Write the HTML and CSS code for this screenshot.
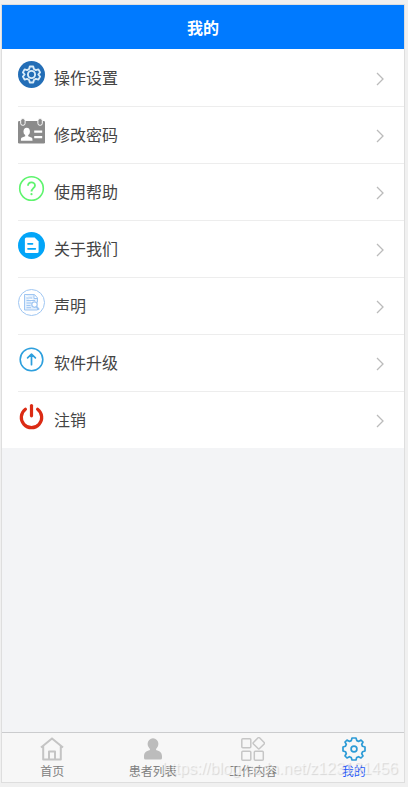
FILE: index.html
```
<!DOCTYPE html>
<html lang="zh-CN">
<head>
<meta charset="utf-8">
<title>我的</title>
<link rel="stylesheet" href="styles.css">
</head>
<body>
<div class="phone">
  <header class="bar">我的</header>
  <main class="content">
    <ul class="list">
      <li class="row">
        <svg class="icon" viewBox="0 0 27 27"><circle cx="13.5" cy="13.5" r="13.5" fill="#236eb7"/><g fill="none" stroke="#d9ebf8"><path stroke-width="1.9" stroke-linejoin="round" d="M11.8 5.5h3.4l.7 2.5 2 1.1 2.5-.7 1.7 3-1.8 2.1 1.8 2.1-1.7 3-2.5-.7-2 1.1-.7 2.5h-3.4l-.7-2.5-2-1.1-2.500.7-1.700-3 1.800-2.100-1.800-2.100 1.700-3 2.500.7 2-1.100z"/><circle cx="13.5" cy="13.5" r="3.6" stroke-width="1.9"/></g></svg>
        <span class="label">操作设置</span><svg class="arrow" viewBox="0 0 8 14"><path d="M1 1l6 6-6 6"/></svg>
      </li>
      <li class="row">
        <svg class="icon" viewBox="0 0 27 27"><rect y="3" width="27" height="22.6" rx="1.3" fill="#8b8b8b"/><g fill="#8b8b8b" stroke="#fff" stroke-width="1"><rect x="2.7" y=".6" width="4.4" height="6.7" rx="2"/><rect x="19.9" y=".6" width="4.4" height="6.7" rx="2"/></g><g fill="#fff"><ellipse cx="8.7" cy="13.6" rx="3.2" ry="3.8"/><path d="M7.2 16h3v2.3l3.700 1.500c.5.500.6 1.500.6 2.900H2.900c0-1.400.1-2.400.6-2.900l3.700-1.500zM16.200 12.400h8v2.300h-8zM16.200 18h8v2.300h-8z"/></g></svg>
        <span class="label">修改密码</span><svg class="arrow" viewBox="0 0 8 14"><path d="M1 1l6 6-6 6"/></svg>
      </li>
      <li class="row">
        <svg class="icon" viewBox="0 0 27 27"><g fill="none" stroke="#5ef46e"><circle cx="13.5" cy="13.5" r="11.8" stroke-width="1.6"/><path stroke-width="1.8" d="M10 10.8c0-4.500 7-4.500 7-.4 0 2.600-3.500 3-3.500 6.200"/></g><circle cx="13.5" cy="19.200" r="1.100" fill="#5ef46e"/></svg>
        <span class="label">使用帮助</span><svg class="arrow" viewBox="0 0 8 14"><path d="M1 1l6 6-6 6"/></svg>
      </li>
      <li class="row">
        <svg class="icon" viewBox="0 0 27 27"><circle cx="13.5" cy="13.5" r="13.5" fill="#03a5f8"/><path fill="#fff" d="M8.400 5.600h8.200l4 4v10q0 1.500-1.500 1.500H8.400q-1.500 0-1.500-1.500V7.100q0-1.500 1.500-1.500z"/><path stroke="#03a5f8" stroke-width="1.700" stroke-linecap="round" d="M10 11.800h4.500M10 16.800h7.300"/></svg>
        <span class="label">关于我们</span><svg class="arrow" viewBox="0 0 8 14"><path d="M1 1l6 6-6 6"/></svg>
      </li>
      <li class="row">
        <svg class="icon" viewBox="0 0 27 27"><g fill="none" stroke="#9fc6f2"><circle cx="13.5" cy="13.5" r="13"/><path fill="#e4f0fd" d="M6.500 5.500h10l3 3.400v4.600M19.500 19.500v1.500h-13V5.500M16 6v3.500h3.500"/><path d="M8.500 9h5.500M8.500 11.500h8.500M8.500 14h5M8.500 16.500h4M8.500 18.700h4.500"/><circle cx="16.500" cy="15.600" r="2.700" fill="#fff" stroke-width="1.200"/><path stroke-width="1.700" d="M18.400 17.600l2.700 3"/></g></svg>
        <span class="label">声明</span><svg class="arrow" viewBox="0 0 8 14"><path d="M1 1l6 6-6 6"/></svg>
      </li>
      <li class="row">
        <svg class="icon" viewBox="0 0 27 27"><g fill="none" stroke="#2d9fdd" stroke-linecap="round" stroke-linejoin="round"><circle cx="13.5" cy="13.5" r="11.300" stroke-width="1.600"/><path stroke-width="1.700" d="M13.500 18.700V8.500M9.600 11.800l3.900-3.600 3.900 3.600"/></g></svg>
        <span class="label">软件升级</span><svg class="arrow" viewBox="0 0 8 14"><path d="M1 1l6 6-6 6"/></svg>
      </li>
      <li class="row">
        <svg class="icon" viewBox="0 0 27 27"><g fill="none" stroke="#db2b14" stroke-width="3.200" stroke-linecap="round"><path d="M13.500 2.600v10.200"/><path d="M7.400 6.300a10.200 10.200 0 1 0 12.200 0"/></g></svg>
        <span class="label">注销</span><svg class="arrow" viewBox="0 0 8 14"><path d="M1 1l6 6-6 6"/></svg>
      </li>
    </ul>
  </main>
  <nav class="tabs">
    <a class="tab"><svg class="tab-icon" viewBox="0 0 24 24"><g fill="none" stroke="#c4c4c4" stroke-width="2" stroke-linejoin="round"><path d="M1 10.400L12 1.400l11 9M3.200 9v13.500h17.600V9M9 22.500v-8.100h6v8.100"/></g></svg><span>首页</span></a>
    <a class="tab"><svg class="tab-icon" viewBox="0 0 24 24"><g fill="#bcbcbc"><ellipse cx="12" cy="7" rx="5.400" ry="5.700"/><path d="M8.500 10h7l-.5 3c4.100 1.200 6 2.700 6 6.500V21q0 1.600-1.600 1.600H4.600Q3 22.600 3 21v-1.500c0-3.800 1.900-5.300 6-6.500z"/></g></svg><span>患者列表</span></a>
    <a class="tab"><svg class="tab-icon" viewBox="0 0 24 24"><g fill="none" stroke="#c6c6c6" stroke-width="1.500"><rect x=".8" y="1.700" width="9" height="9" rx="1"/><rect x=".8" y="14.200" width="9" height="9" rx="1"/><rect x="13.300" y="14.200" width="9" height="9" rx="1"/><rect x="13.500" y="1.900" width="8.600" height="8.600" rx="1" transform="rotate(45 17.800 6.200)"/></g></svg><span>工作内容</span></a>
    <a class="tab active"><svg class="tab-icon" viewBox="0 0 24 24"><g fill="none" stroke="#2c9bd6" stroke-width="1.700" stroke-linejoin="round"><path d="M10 1h4l.8 2.600 1.800.8L19 3.100 21 5l-1.300 2.500.8 1.800L23 10v4l-2.500.8-.8 1.800L21 19l-2 2-2.500-1.300-1.800.8L14 23h-4l-.8-2.500-1.800-.8L5 21l-2-2 1.300-2.500-.8-1.800L1 14v-4l2.500-.8.8-1.800L3 5l2-1.900 2.500 1.300 1.800-.8z"/><circle cx="12" cy="12" r="2.900"/></g></svg><span>我的</span></a>
    <div class="watermark">https://blog.csdn.net/z123181456</div>
  </nav>
</div>
</body>
</html>
```
FILE: styles.css
```
* { box-sizing: border-box; }
body {
  margin: 0;
  height: 787px;
  padding: 4px 3px 4px 1px;
  overflow: hidden;
  background: #f0f0f0;
  font-family: "Noto Sans CJK SC", sans-serif;
}
.phone {
  display: flex;
  flex-direction: column;
  width: 404px;
  height: 779px;
  border: 1px solid #dedede;
  background: #f3f4f6;
}
.bar {
  height: 44px;
  background: #007aff;
  color: #fff;
  font-size: 16px;
  font-weight: 700;
  line-height: 44px;
  text-align: center;
}
.content { flex: 1; }
.list {
  margin: 0;
  padding: 0 0 0 16px;
  list-style: none;
  background: #fff;
}
.row {
  display: flex;
  height: 57px;
  padding: 12px 20px 0 0;
  background: linear-gradient(#ededed, #ededed) top / 100% 1px no-repeat;
}
.row:first-child { background: none; }
.icon { width: 27px; height: 27px; margin-right: 9px; }
.label {
  flex: 1;
  color: #444;
  font-size: 16px;
  line-height: 32px;
}
.arrow {
  width: 8px;
  height: 14px;
  margin-top: 11px;
  fill: none;
  stroke: #bbb;
  stroke-width: 1.3;
}
.tabs {
  position: relative;
  display: flex;
  height: 50px;
  border-top: 1px solid #cbccce;
  background: #f7f7f7;
}
.tab {
  display: flex;
  flex: 1;
  flex-direction: column;
  align-items: center;
  padding-top: 4px;
  color: #808080;
  font-size: 12px;
  line-height: 20px;
}
.tab-icon { width: 24px; height: 24px; }
.active { color: #2457ff; }
.watermark {
  position: absolute;
  right: 6px;
  bottom: 3px;
  color: rgba(255, 255, 255, .5);
  font: 16px/20px "Liberation Sans", Arial, sans-serif;
  text-shadow: 1px 1px 1px rgba(0, 0, 0, .13);
  white-space: nowrap;
}
```
